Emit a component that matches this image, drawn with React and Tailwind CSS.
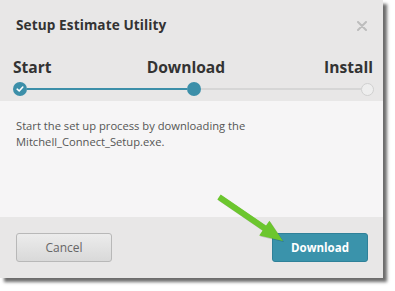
export default function App() {
  return (
    <div className="relative w-[395px] h-[291px] bg-white overflow-hidden" style={{ fontFamily: '"Open Sans", "Liberation Sans", sans-serif' }}>
      <div className="w-[383px] h-[278px] flex flex-col shadow-[4px_4px_3px_rgba(60,60,60,0.75)]">
        <div className="h-[101px] bg-[#e8e7e7] flex flex-col">
          <div className="flex items-center justify-between pl-4 pr-[16px] pt-[12px] h-[38px]">
            <div className="text-[13.6px] font-bold text-[#333] leading-[24px] tracking-[0.1px]">Setup Estimate Utility</div>
            <svg width="10" height="10" viewBox="0 0 10 10" className="mt-[2px]">
              <path d="M1 1L9 9M9 1L1 9" stroke="#bdbdbd" strokeWidth="2" strokeLinecap="round" />
            </svg>
          </div>
          <div className="flex justify-between pl-[13px] pr-[10px] mt-[18px] text-[15.6px] font-bold text-[#333] leading-[22px]">
            <span>Start</span>
            <span className="mr-[4px]">Download</span>
            <span>Install</span>
          </div>
          <div className="flex items-center ml-[13px] w-[361px] mt-[4px]">
            <div className="w-[14px] h-[14px] rounded-full bg-[#3c8fa9] flex items-center justify-center">
              <svg width="8" height="8" viewBox="0 0 8 8">
                <path d="M1.2 4.2L3.2 6L6.8 2" stroke="white" strokeWidth="1.6" fill="none" strokeLinecap="round" strokeLinejoin="round" />
              </svg>
            </div>
            <div className="flex-1 h-[2px] bg-[#3c8fa9]" />
            <div className="w-[14px] h-[14px] rounded-full bg-[#3c8fa9]" />
            <div className="flex-1 h-[2px] bg-[#d6d6d6]" />
            <div className="w-[13px] h-[13px] rounded-full bg-[#eeeeee] border border-[#d0d0d0]" />
          </div>
        </div>
        <div className="h-[116px] bg-[#f6f5f6] pl-4 pt-[17px] text-[11.2px] leading-[16px] text-[#555]">
          <p>Start the set up process by downloading the</p>
          <p>Mitchell_Connect_Setup.exe.</p>
        </div>
        <div className="flex-1 bg-[#e8e7e7] flex items-start justify-between pl-4 pr-[15px] pt-[16px]">
          <button className="w-[96px] h-[29px] rounded-[3px] border border-[#b8b8b8] bg-gradient-to-b from-[#ececec] to-[#d9d9d9] text-[12px] text-[#666]">Cancel</button>
          <button className="w-[96px] h-[29px] rounded-[3px] border border-[#2f8199] bg-[#3a93ab] text-[11.5px] font-bold text-white">Download</button>
        </div>
      </div>
      <svg className="absolute inset-0 pointer-events-none" width="395" height="291" viewBox="0 0 395 291">
        <polygon points="221.7,195.5 267,226.6 270.4,221.7 284,242 260.2,236.5 263.6,231.6 218.3,200.5" fill="rgba(0,0,0,0.18)" />
        <polygon points="220.7,194.5 266,225.6 269.4,220.7 283,241 259.2,235.5 262.6,230.6 217.3,199.5" fill="#6cc62e" />
      </svg>
    </div>
  );
}
